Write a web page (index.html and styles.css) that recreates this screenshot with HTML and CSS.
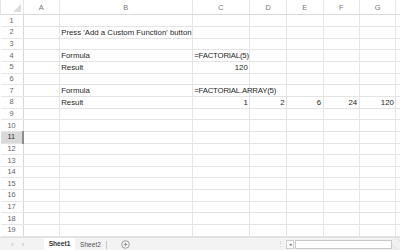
FILE: index.html
```html
<!DOCTYPE html>
<html>
<head>
<meta charset="utf-8">
<link rel="stylesheet" href="styles.css">
</head>
<body>
<div class="sheet">
<table class="grid">
<colgroup>
<col class="c-hd"><col class="c-a"><col class="c-b"><col class="c-c"><col class="c-d"><col class="c-e"><col class="c-f"><col class="c-g"><col class="c-h">
</colgroup>
<thead>
<tr class="hdr"><th class="corner"><span class="tri"></span></th><th>A</th><th>B</th><th>C</th><th>D</th><th>E</th><th>F</th><th>G</th><th></th></tr>
</thead>
<tbody>
<tr><th>1</th><td></td><td></td><td></td><td></td><td></td><td></td><td></td><td></td></tr>
<tr><th>2</th><td></td><td>Press 'Add a Custom Function' button</td><td></td><td></td><td></td><td></td><td></td><td></td></tr>
<tr><th>3</th><td></td><td></td><td></td><td></td><td></td><td></td><td></td><td></td></tr>
<tr><th>4</th><td></td><td>Formula</td><td class="f">=FACTORIAL(5)</td><td></td><td></td><td></td><td></td><td></td></tr>
<tr><th>5</th><td></td><td>Result</td><td class="num">120</td><td></td><td></td><td></td><td></td><td></td></tr>
<tr><th>6</th><td></td><td></td><td></td><td></td><td></td><td></td><td></td><td></td></tr>
<tr><th>7</th><td></td><td>Formula</td><td class="f">=FACTORIAL.ARRAY(5)</td><td></td><td></td><td></td><td></td><td></td></tr>
<tr><th>8</th><td></td><td>Result</td><td class="num">1</td><td class="num">2</td><td class="num">6</td><td class="num">24</td><td class="num">120</td><td></td></tr>
<tr><th>9</th><td></td><td></td><td></td><td></td><td></td><td></td><td></td><td></td></tr>
<tr><th>10</th><td></td><td></td><td></td><td></td><td></td><td></td><td></td><td></td></tr>
<tr><th class="sel">11</th><td></td><td></td><td></td><td></td><td></td><td></td><td></td><td></td></tr>
<tr><th>12</th><td></td><td></td><td></td><td></td><td></td><td></td><td></td><td></td></tr>
<tr><th>13</th><td></td><td></td><td></td><td></td><td></td><td></td><td></td><td></td></tr>
<tr><th>14</th><td></td><td></td><td></td><td></td><td></td><td></td><td></td><td></td></tr>
<tr><th>15</th><td></td><td></td><td></td><td></td><td></td><td></td><td></td><td></td></tr>
<tr><th>16</th><td></td><td></td><td></td><td></td><td></td><td></td><td></td><td></td></tr>
<tr><th>17</th><td></td><td></td><td></td><td></td><td></td><td></td><td></td><td></td></tr>
<tr><th>18</th><td></td><td></td><td></td><td></td><td></td><td></td><td></td><td></td></tr>
<tr><th>19</th><td></td><td></td><td></td><td></td><td></td><td></td><td></td><td></td></tr>
</tbody>
</table>
<div class="tabbar">
  <div class="nav"><span class="arr">&#8249;</span><span class="arr">&#8250;</span></div>
  <div class="tab active">Sheet1</div>
  <div class="tab">Sheet2</div>
  <div class="sep"></div>
  <div class="add"><svg width="9" height="9" viewBox="0 0 9 9"><circle cx="4.5" cy="4.5" r="3.8" fill="none" stroke="#8a8a8a" stroke-width="0.8"/><path d="M4.5 2.6v3.8M2.6 4.5h3.8" stroke="#8a8a8a" stroke-width="0.8"/></svg></div>
  <div class="spacer"></div>
  <div class="dots">&#8942;</div>
  <div class="hscroll"><span class="lbtn">&#9666;</span><span class="track"></span></div>
  <div class="hatch"></div>
</div>
</div>
</body>
</html>
```
FILE: styles.css
```css
html, body {
  margin: 0;
  padding: 0;
  background: #ffffff;
}
body {
  width: 400px;
  height: 250px;
  overflow: hidden;
  font-family: "Liberation Sans", Arial, sans-serif;
}
.sheet {
  display: flex;
  flex-direction: column;
  width: 400px;
  height: 250px;
}
.grid {
  border-collapse: collapse;
  table-layout: fixed;
  width: 400px;
  font-size: 7.8px;
  color: #1f1f1f;
}
.c-hd { width: 22.7px; }
.c-a { width: 36px; }
.c-b { width: 133px; }
.c-c { width: 57.6px; }
.c-d { width: 36.7px; }
.c-e { width: 36.7px; }
.c-f { width: 36px; }
.c-g { width: 36.7px; }
.c-h { width: 4.6px; }
.grid tr { height: 11.67px; }
.grid tr.hdr { height: 14.8px; }
.grid td, .grid th {
  padding: 0 1.5px;
  border: 1px solid #e4e4e4;
  white-space: nowrap;
  overflow: visible;
  line-height: 10px;
  font-weight: normal;
}
.grid td {
  text-align: left;
  vertical-align: bottom;
}
.grid td.num { text-align: right; }
.grid td.f { letter-spacing: -0.2px; }
.grid th {
  color: #666666;
  text-align: center;
  border-color: #e6e6e6;
  font-size: 7.4px;
}
.grid thead th {
  border-top: none;
  border-bottom: 1px solid #d9d9d9;
  color: #777777;
  vertical-align: middle;
  padding-top: 1px;
}
.grid tbody th {
  border-right: 1px solid #d9d9d9;
  border-left: none;
}
.grid th.sel {
  background: #d9d9d9;
  color: #333333;
  border-right: 2px solid #8d8d8d;
}
.grid .corner {
  position: relative;
}
.tri {
  position: absolute;
  right: 2px;
  bottom: 2px;
  width: 0;
  height: 0;
  border-left: 8px solid transparent;
  border-bottom: 8px solid #dcdcdc;
}
.tabbar {
  flex: 1;
  display: flex;
  align-items: stretch;
  background: #f3f3f3;
  border-top: 1px solid #e0e0e0;
  font-size: 6.6px;
  color: #555555;
}
.nav {
  width: 44px;
  flex-shrink: 0;
  box-sizing: border-box;
  display: flex;
  gap: 8px;
  padding-left: 11px;
  align-items: center;
  color: #b5b5b5;
  font-size: 8px;
}
.tab {
  width: 31px;
  flex-shrink: 0;
  display: flex;
  align-items: center;
  justify-content: center;
}
.tab.active {
  background: #ffffff;
  font-weight: bold;
  color: #333333;
  border-bottom: 1.5px solid #9a9a9a;
  box-sizing: border-box;
}
.sep {
  width: 1px;
  margin: 3px 0 2px;
  background: #c8c8c8;
}
.add {
  display: flex;
  align-items: center;
  padding-left: 14px;
}
.spacer { flex: 1; }
.dots {
  display: flex;
  align-items: center;
  color: #c0c0c0;
  font-size: 7px;
  padding-right: 2px;
}
.hscroll {
  width: 106px;
  display: flex;
  align-items: center;
  gap: 1px;
  margin: 2px 0;
}
.lbtn {
  width: 6px;
  height: 7px;
  font-size: 5px;
  color: #777777;
  display: flex;
  align-items: center;
  justify-content: center;
  border: 1px solid #cfcfcf;
  background: #fafafa;
}
.track {
  flex: 1;
  height: 7px;
  background: #ffffff;
  border: 1px solid #c9c9c9;
}
.hatch {
  width: 8px;
  background: repeating-linear-gradient(45deg, #e6e6e6 0 1px, #f6f6f6 1px 2px);
}
```
